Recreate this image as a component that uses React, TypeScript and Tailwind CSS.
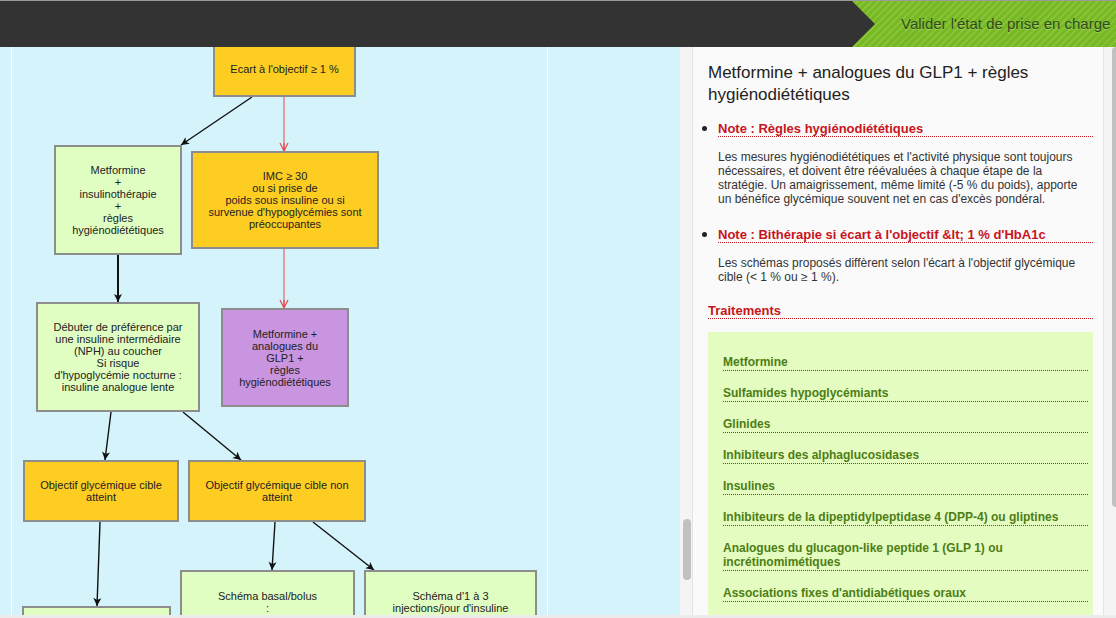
import React from 'react';

type Node = {
  lines: string[];
  cls: string;
  top?: boolean;
};

const YELLOW = 'bg-[#fecd22]';
const GREEN = 'bg-[#e0fec2]';
const PURPLE = 'bg-[#c994e0]';

const nodes: Node[] = [
  { lines: ["Ecart à l'objectif ≥ 1 %"], cls: `${YELLOW} left-[213px] top-[-6px] w-[143px] h-[56px]` },
  { lines: ['Metformine', '+', 'insulinothérapie', '+', 'règles', 'hygiénodiététiques'], cls: `${GREEN} left-[54px] top-[98px] w-[128px] h-[110px]` },
  { lines: ['IMC ≥ 30', 'ou si prise de', 'poids sous insuline ou si', "survenue d'hypoglycémies sont", 'préoccupantes'], cls: `${YELLOW} left-[191px] top-[104px] w-[188px] h-[98px]` },
  { lines: ['Débuter de préférence par', 'une insuline intermédiaire', '(NPH) au coucher', 'Si risque', "d'hypoglycémie nocturne :", 'insuline analogue lente'], cls: `${GREEN} left-[36px] top-[255px] w-[164px] h-[110px]` },
  { lines: ['Metformine +', 'analogues du', 'GLP1 +', 'règles', 'hygiénodiététiques'], cls: `${PURPLE} left-[221px] top-[261px] w-[128px] h-[99px]` },
  { lines: ['Objectif glycémique cible', 'atteint'], cls: `${YELLOW} left-[23px] top-[413px] w-[156px] h-[62px]` },
  { lines: ['Objectif glycémique cible non', 'atteint'], cls: `${YELLOW} left-[188px] top-[413px] w-[178px] h-[62px]` },
  { lines: ['Schéma basal/bolus', ':', 'insuline rapide aux repas'], cls: `${GREEN} left-[180px] top-[523px] w-[175px] h-[100px]`, top: true },
  { lines: ["Schéma d'1 à 3", "injections/jour d'insuline", 'biphasique'], cls: `${GREEN} left-[364px] top-[523px] w-[173px] h-[100px]`, top: true },
  { lines: ['Insuline'], cls: `${GREEN} left-[22px] top-[559px] w-[149px] h-[60px]`, top: true },
];

const arrows = [
  { x1: 252, y1: 50, x2: 181, y2: 98, red: false },
  { x1: 284, y1: -10, x2: 284, y2: 104, red: true },
  { x1: 284, y1: 202, x2: 284, y2: 261, red: true },
  { x1: 118, y1: 208, x2: 118, y2: 255, red: false, thick: true },
  { x1: 111, y1: 365, x2: 105, y2: 413, red: false },
  { x1: 183, y1: 365, x2: 241, y2: 413, red: false },
  { x1: 275, y1: 475, x2: 272, y2: 523, red: false },
  { x1: 313, y1: 475, x2: 374, y2: 523, red: false },
  { x1: 100, y1: 475, x2: 97, y2: 559, red: false },
];

const traitements = [
  ['Metformine'],
  ['Sulfamides hypoglycémiants'],
  ['Glinides'],
  ['Inhibiteurs des alphaglucosidases'],
  ['Insulines'],
  ['Inhibiteurs de la dipeptidylpeptidase 4 (DPP-4) ou gliptines'],
  ['Analogues du glucagon-like peptide 1 (GLP 1) ou', 'incrétinomimétiques'],
  ["Associations fixes d'antidiabétiques oraux"],
  ['Autres traitements'],
];

function Flowchart() {
  return (
    <div className="relative w-[680px] h-full overflow-hidden bg-[#d5f3fb]">
      <div className="absolute left-[11px] top-0 bottom-0 w-[1px] bg-white" />
      <div className="absolute left-[547px] top-0 bottom-0 w-[1px] bg-white" />
      <svg className="absolute inset-0" width="680" height="568">
        <defs>
          <marker id="hb" markerWidth="10" markerHeight="10" refX="9" refY="5" orient="auto" markerUnits="userSpaceOnUse">
            <path d="M1,1 L9,5 L1,9 L3,5 z" fill="#111" />
          </marker>
          <marker id="hr" markerWidth="10" markerHeight="10" refX="9" refY="5" orient="auto" markerUnits="userSpaceOnUse">
            <path d="M1,1 L9,5 L1,9 M9,5 L1,5" fill="none" stroke="#e8494b" strokeWidth="1.2" />
          </marker>
        </defs>
        {arrows.map((a, i) => (
          <line
            key={i}
            x1={a.x1}
            y1={a.y1}
            x2={a.x2}
            y2={a.y2}
            stroke={a.red ? '#e8494b' : '#111'}
            strokeWidth={a.thick ? 2 : a.red ? 1 : 1.4}
            markerEnd={a.red ? 'url(#hr)' : 'url(#hb)'}
          />
        ))}
      </svg>
      {nodes.map((n, i) => (
        <div
          key={i}
          className={`absolute border-2 border-[#8d8d8d] flex flex-col items-center px-1 text-center text-[11px] leading-[12px] text-[#222] ${
            n.top ? 'justify-start pt-[18px]' : 'justify-center'
          } ${n.cls}`}
        >
          {n.lines.map((l, j) => (
            <span key={j}>{l}</span>
          ))}
        </div>
      ))}
    </div>
  );
}

export default function App() {
  return (
    <div className="w-[1116px] h-[618px] overflow-hidden flex flex-col bg-white font-['Liberation_Sans',Arial,sans-serif]">
      <header className="h-[47px] flex border-t border-[#9a9a9a] bg-[#333333] shrink-0">
        <div className="w-[852px]" />
        <div className="relative flex-1 flex items-center bg-[repeating-linear-gradient(135deg,#78b826_0px,#78b826_3px,#86c434_3px,#86c434_5px)]">
          <svg className="absolute left-0 top-0" width="24" height="46" viewBox="0 0 24 46">
            <polygon points="0,0 23,23 0,46" fill="#333333" />
          </svg>
          <span className="ml-[49px] whitespace-nowrap text-[15px] text-[#2f4c17] [text-shadow:0_1px_0_rgba(255,255,255,0.25)]">
            Valider l'état de prise en charge
          </span>
        </div>
      </header>

      <div className="flex h-[568px]">
        <Flowchart />
        <div className="relative w-[13px] bg-[#f4f4f4] border-r border-[#e4e4e4]">
          <div className="absolute left-[3px] top-[472px] w-[8px] h-[61px] rounded-full bg-[#c1c1c1]" />
        </div>
        <div className="flex-1 bg-[#fafafa] pl-[15px] pr-[10px] pt-[15px] overflow-hidden">
          <h1 className="text-[17px] leading-[22px] text-[#222] font-light">
            Metformine + analogues du GLP1 + règles hygiénodiététiques
          </h1>
          <ul className="mt-[10px] list-disc pl-[10px] marker:text-[#222]">
            <li>
              <div className="text-[13px] leading-[15px] font-bold text-[#c8141c] border-b border-dotted border-[#c8141c]">
                Note : Règles hygiénodiététiques
              </div>
              <p className="mt-[13px] pr-[14px] text-[12px] leading-[14px] text-[#333]">
                Les mesures hygiénodiététiques et l'activité physique sont toujours nécessaires, et doivent être réévaluées à chaque étape de la stratégie. Un amaigrissement, même limité (-5 % du poids), apporte un bénéfice glycémique souvent net en cas d'excès pondéral.
              </p>
            </li>
            <li className="mt-[16px]">
              <div className="text-[13px] leading-[15px] font-bold text-[#c8141c] border-b border-dotted border-[#c8141c]">
                Note : Bithérapie si écart à l'objectif &amp;lt; 1 % d'HbA1c
              </div>
              <p className="mt-[13px] pr-[14px] text-[12px] leading-[14px] text-[#333]">
                Les schémas proposés diffèrent selon l'écart à l'objectif glycémique cible (&lt; 1 % ou ≥ 1 %).
              </p>
            </li>
          </ul>
          <h2 className="mt-[19px] text-[13px] leading-[15px] font-bold text-[#c8141c] border-b border-dotted border-[#c8141c]">
            Traitements
          </h2>
          <div className="mt-[13px] bg-[#e4fcc0] pl-[15px] pr-[5px] pt-[23px] pb-4 flex flex-col gap-[15px]">
            {traitements.map((t, i) => (
              <div key={i} className="text-[12px] leading-[14px] font-bold text-[#4e7d16] border-b border-dotted border-[#4a5a30] pb-[1px]">
                {t.map((l, j) => (
                  <div key={j}>{l}</div>
                ))}
              </div>
            ))}
          </div>
        </div>
        <div className="relative w-[13px] bg-[#f4f4f4] border-l border-[#e4e4e4]">
          <div className="absolute left-[8px] top-0 w-[8px] h-[460px] rounded-full bg-[#c1c1c1]" />
        </div>
      </div>
      <div className="h-[3px] bg-[#ececec]" />
    </div>
  );
}
